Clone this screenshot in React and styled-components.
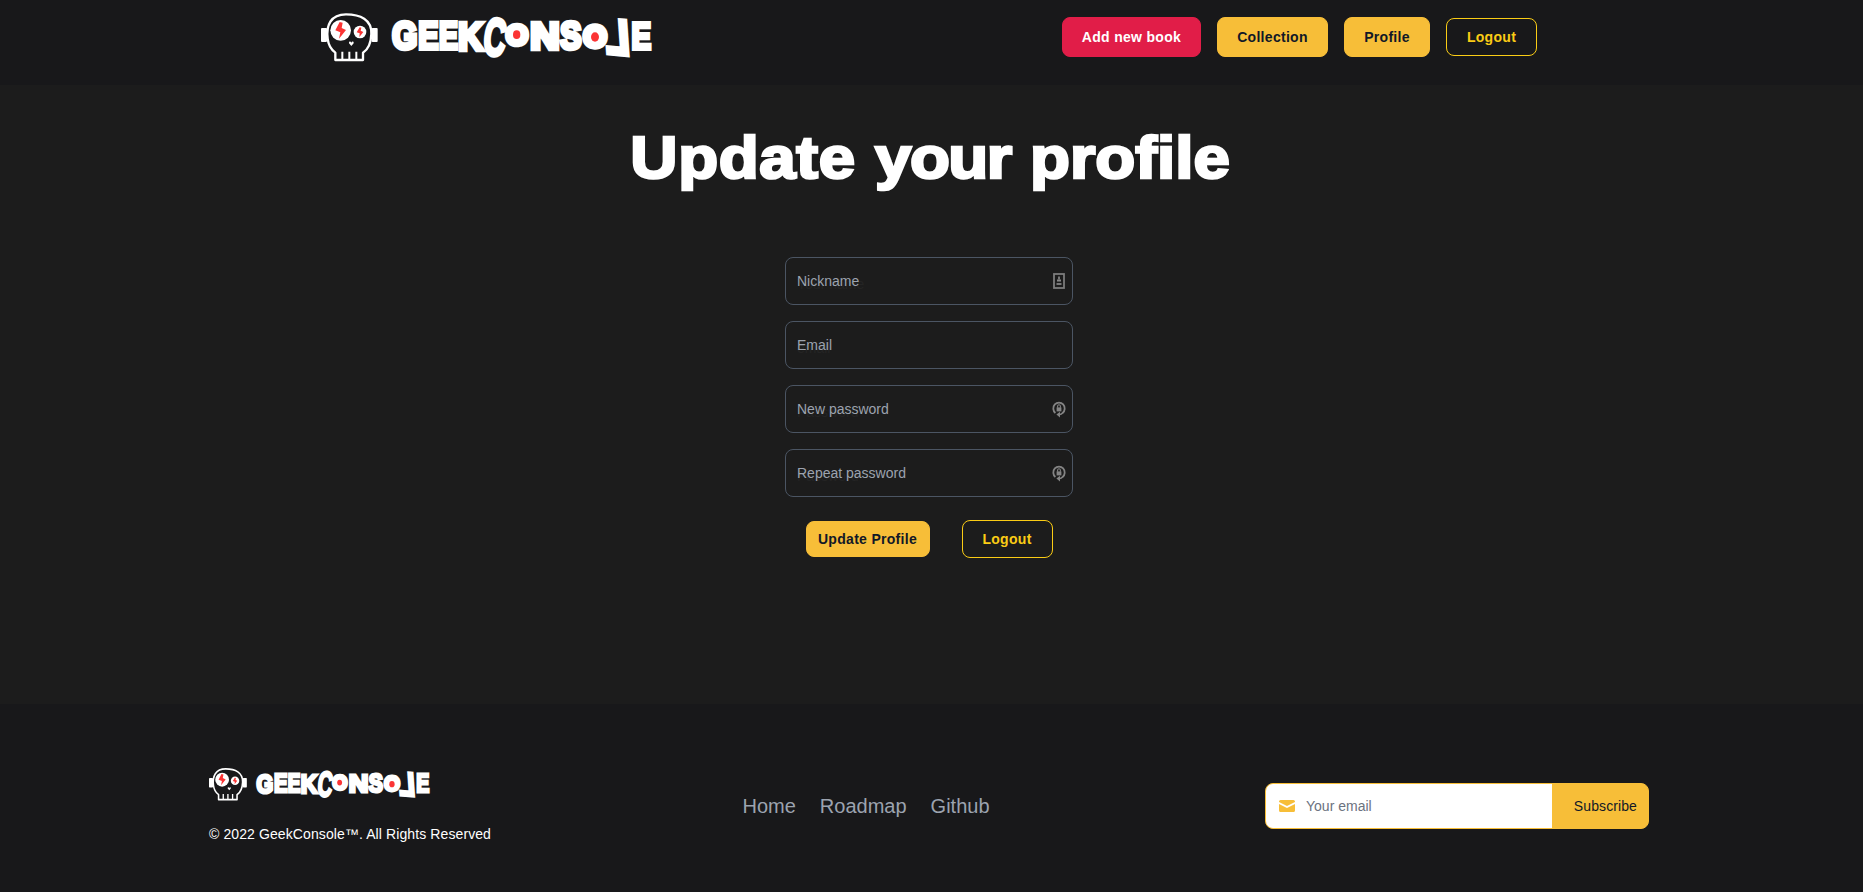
import React from "react";
import styled, { createGlobalStyle } from "styled-components";

const GlobalStyle = createGlobalStyle`
  *, *::before, *::after { box-sizing: border-box; }
  html, body { margin: 0; padding: 0; background: #1c1c1c; overflow: hidden; }
  body, button, input { font-family: "Liberation Sans", Arial, sans-serif; }
`;

const Page = styled.div`
  display: flex;
  flex-direction: column;
  height: 892px;
  width: 100%;
  color: #fff;
`;

const Header = styled.header`
  height: 85px;
  flex: none;
  background: #18181a;
  padding: 13px 5px 0 0;
`;

const HeaderInner = styled.div`
  width: 1216px;
  margin: 0 auto;
  display: flex;
  justify-content: space-between;
  align-items: flex-start;
`;

const Nav = styled.nav`
  display: flex;
  align-items: center;
  gap: 16px;
  margin-top: 4px;
`;

const tones = {
  red: { bg: "#e11d48", fg: "#ffffff", border: "#e11d48" },
  amber: { bg: "#f7be38", fg: "#111827", border: "#f7be38" },
  outline: { bg: "transparent", fg: "#facc15", border: "#facc15" },
};

const Button = styled.button`
  width: ${(p) => p.$w}px;
  height: ${(p) => p.$h}px;
  padding: 0;
  border-radius: 8px;
  border: 1px solid ${(p) => tones[p.$tone].border};
  background: ${(p) => tones[p.$tone].bg};
  color: ${(p) => tones[p.$tone].fg};
  font-size: 14px;
  font-weight: 700;
  line-height: 20px;
  letter-spacing: 0.3px;
  white-space: nowrap;
  cursor: pointer;
`;

const Main = styled.main`
  flex: 1;
  background: #1c1c1c;
  padding: 43px 5px 0 0;
  display: flex;
  flex-direction: column;
  align-items: center;
`;

const Title = styled.h1`
  margin: 0 0 69px 2px;
  height: 60px;
  font-size: 60px;
  line-height: 60px;
  font-weight: 700;
  white-space: nowrap;
  word-spacing: 1px;
  transform: scaleX(1.09);
  -webkit-text-stroke: 2.6px #fff;
`;

const Word = styled.span`
  letter-spacing: ${(p) => p.$track}px;
`;

const Form = styled.form`
  width: 288px;
  display: flex;
  flex-direction: column;
  gap: 16px;
`;

const Field = styled.label`
  position: relative;
  display: flex;
  align-items: center;
  height: 48px;
  border: 1px solid #4b5563;
  border-radius: 8px;
  padding: 0 6px 0 11px;
`;

const FieldInput = styled.input`
  flex: 1;
  min-width: 0;
  height: 100%;
  border: 0;
  padding: 5px 0 0;
  outline: 0;
  background: transparent;
  font-size: 14px;
  color: #fff;
  &::placeholder { color: #242424; opacity: 1; }
`;

const FieldLabel = styled.span`
  position: absolute;
  left: 11px;
  top: 13px;
  font-size: 14px;
  line-height: 20px;
  color: #9ca3af;
`;

const FormActions = styled.div`
  display: flex;
  justify-content: center;
  align-items: center;
  gap: 32px;
  margin-top: 7px;
`;

const Footer = styled.footer`
  height: 188px;
  flex: none;
  background: #18181a;
  padding: 64px 5px 0 0;
`;

const FooterInner = styled.div`
  width: 1440px;
  margin: 0 auto;
  display: grid;
  grid-template-columns: 533.5px 1fr 384px;
  align-items: start;
`;

const Brand = styled.div`
  display: flex;
  flex-direction: column;
`;

const Copyright = styled.p`
  margin: 23px 0 0;
  font-size: 14px;
  line-height: 20px;
  letter-spacing: 0.1px;
`;

const Links = styled.div`
  display: flex;
  gap: 24px;
  margin-top: 24px;
`;

const FooterLink = styled.a`
  font-size: 20px;
  line-height: 28px;
  color: #9ca3af;
`;

const Subscribe = styled.form`
  display: flex;
  height: 46px;
  margin-top: 15px;
  border: 1px solid #f7be38;
  border-radius: 8px;
  background: #f7be38;
  overflow: hidden;
`;

const EmailBox = styled.div`
  width: 286px;
  display: flex;
  align-items: center;
  gap: 11px;
  padding-left: 13px;
  background: #fff;
`;

const EmailInput = styled.input`
  flex: 1;
  min-width: 0;
  border: 0;
  outline: 0;
  padding: 0;
  background: transparent;
  font-size: 14px;
  &::placeholder { color: #6b7280; opacity: 1; }
`;

const SubscribeButton = styled.button`
  flex: 1;
  border: 0;
  padding: 0 11px 0 0;
  text-align: right;
  background: transparent;
  color: #111827;
  font-size: 14px;
  letter-spacing: 0.1px;
`;

const LogoSvg = styled.svg`
  display: block;
  width: ${(p) => p.$w}px;
  height: ${(p) => p.$h}px;
  overflow: visible;
`;

const ContactSvg = styled.svg`
  margin-right: 1px;
`;

// Left and right ink edges of each capital at a 100-unit font size.
const ink = {
  G: [4, 72], E: [7, 63], K: [7, 72], C: [4.5, 69],
  O: [4, 74], N: [7, 65.5], S: [4, 62.5], L: [7, 58],
};

// Places a capital so that its stroked ink fills the box x1..x2, y1..y2.
function Letter({ ch, x1, x2, y1, y2, s = 9, mirror = false, skew = 0, slope = 0, rot = 0 }) {
  const [l, r] = ink[ch];
  const sx = (x2 - x1) / (r - l + s);
  const round = "GCOS".includes(ch) ? 1.5 : 0;
  const sy = (y2 - y1) / (68.8 + s + round * 2);
  const cx = (x1 + x2) / 2;
  const cy = (y1 + y2) / 2;
  return (
    <text
      transform={`translate(${cx} ${cy}) rotate(${rot}) skewX(${skew}) skewY(${slope}) scale(${mirror ? -sx : sx} ${sy}) translate(${-(l + r) / 2} 34.4)`}
      fontFamily="Liberation Sans, Arial, sans-serif"
      fontWeight="700"
      fontSize="100"
      fill="#fff"
      stroke="#fff"
      strokeWidth={s}
    >
      {ch}
    </text>
  );
}

function Logo({ width, height }) {
  return (
    <LogoSvg $w={width} $h={height} viewBox="33 39 993 147" preserveAspectRatio="none">
      <rect x="33" y="84" width="18" height="42" rx="3" fill="#fff" />
      <rect x="185" y="84" width="18" height="42" rx="3" fill="#fff" />
      <path
        d="M76 180V158C62 148 55 134 53 116C48 76 62 43 108 43C150 43 186 58 184 102C183 128 175 148 159 158V180Z"
        fill="#18181a"
        stroke="#fff"
        strokeWidth="7"
        strokeLinejoin="round"
      />
      <path d="M97 155V180M118 155V180M139 155V180" stroke="#fff" strokeWidth="6" />
      <circle cx="92" cy="91" r="31" fill="#fff" />
      <circle cx="150" cy="96" r="19" fill="#fff" />
      <path d="M89 66L76 91L91 97L87 116L108 90L95 84L98 68Z" fill="#fb3434" />
      <path d="M149 82L140 97L149 100L148 111L160 96L152 92L154 83Z" fill="#fb3434" />
      <path d="M124 138L117 130C116 124 122 123 124 128C126 123 132 124 131 130Z" fill="#fff" />
      <Letter ch="G" x1={245} x2={322} y1={60} y2={157} s={12} />
      <Letter ch="E" x1={326} x2={387} y1={63} y2={154} s={11} />
      <Letter ch="E" x1={388} x2={445} y1={63} y2={154} s={11} />
      <Letter ch="K" x1={446} x2={525} y1={63} y2={157} s={12} />
      <Letter ch="C" x1={523} x2={589} y1={49} y2={174} s={8} rot={7} />
      <Letter ch="O" x1={584} x2={658} y1={66} y2={142} s={26} />
      <ellipse cx="621" cy="104" rx="18" ry="20" fill="#fff" />
      <ellipse cx="620" cy="104" rx="11" ry="13" fill="#fb3434" />
      <Letter ch="N" x1={662} x2={748} y1={65} y2={153} s={12} />
      <Letter ch="S" x1={749} x2={816} y1={60} y2={156} s={12} />
      <Letter ch="L" x1={885} x2={955} y1={53} y2={169} s={10} mirror skew={4} slope={5} />
      <Letter ch="O" x1={816} x2={894} y1={68} y2={150} s={26} />
      <ellipse cx="855" cy="110" rx="19" ry="21" fill="#fff" />
      <ellipse cx="855" cy="111" rx="12" ry="14" fill="#fb3434" />
      <Letter ch="E" x1={966} x2={1025} y1={63} y2={153} s={11} />
    </LogoSvg>
  );
}

const ContactIcon = () => (
  <ContactSvg width="12" height="16" viewBox="0 0 12 16">
    <rect x="1" y="1" width="10" height="14" fill="none" stroke="#7c7c7c" strokeWidth="1.8" />
    <rect x="5" y="3.5" width="2" height="3" fill="#777" />
    <rect x="4" y="6.5" width="4" height="2" fill="#888" />
    <rect x="3.5" y="10" width="5" height="2" fill="#777" />
  </ContactSvg>
);

const PasswordIcon = () => (
  <svg width="14" height="17" viewBox="0 0 14 17">
    <path d="M3.4 12A5.7 5.9 0 1 1 10.6 12Q9.4 13.4 7 13.6" fill="none" stroke="#848484" strokeWidth="1.8" />
    <path d="M8 10.8V16.6L4.4 13.6Z" fill="#848484" />
    <rect x="4.6" y="6.4" width="4.8" height="4" fill="#848484" />
    <path d="M5.6 6.8V5.2A1.4 1.4 0 0 1 8.4 5.2V6.8" fill="none" stroke="#848484" strokeWidth="1.1" />
  </svg>
);

const MailIcon = () => (
  <svg width="16" height="12" viewBox="0 0 16 12">
    <path d="M0 1.9V1.6A1.6 1.6 0 0 1 1.6 0H14.4A1.6 1.6 0 0 1 16 1.6V1.9L8 5.9Z" fill="#f7be38" />
    <path d="M0 4.1L8 8.1L16 4.1V10.4A1.6 1.6 0 0 1 14.4 12H1.6A1.6 1.6 0 0 1 0 10.4Z" fill="#f7be38" />
  </svg>
);

const fields = [
  { label: "Nickname", hint: "Your name", Icon: ContactIcon },
  { label: "Email", hint: "email" },
  { label: "New password", hint: "Password", Icon: PasswordIcon },
  { label: "Repeat password", hint: "Password", Icon: PasswordIcon },
];

export default function App() {
  return (
    <Page>
      <GlobalStyle />
      <Header>
        <HeaderInner>
          <Logo width={331} height={49} />
          <Nav>
            <Button $tone="red" $w={139} $h={40}>Add new book</Button>
            <Button $tone="amber" $w={111} $h={40}>Collection</Button>
            <Button $tone="amber" $w={86} $h={40}>Profile</Button>
            <Button $tone="outline" $w={91} $h={38}>Logout</Button>
          </Nav>
        </HeaderInner>
      </Header>
      <Main>
        <Title>
          <Word $track={0.6}>Update</Word> <Word $track={-1.4}>your</Word> <Word $track={0}>profile</Word>
        </Title>
        <Form>
          {fields.map(({ label, hint, Icon }) => (
            <Field key={label}>
              <FieldInput placeholder={hint} />
              <FieldLabel>{label}</FieldLabel>
              {Icon && <Icon />}
            </Field>
          ))}
          <FormActions>
            <Button type="button" $tone="amber" $w={124} $h={36}>Update Profile</Button>
            <Button type="button" $tone="outline" $w={91} $h={38}>Logout</Button>
          </FormActions>
        </Form>
      </Main>
      <Footer>
        <FooterInner>
          <Brand>
            <Logo width={221} height={33} />
            <Copyright>© 2022 GeekConsole™. All Rights Reserved</Copyright>
          </Brand>
          <Links>
            <FooterLink>Home</FooterLink>
            <FooterLink>Roadmap</FooterLink>
            <FooterLink>Github</FooterLink>
          </Links>
          <Subscribe>
            <EmailBox>
              <MailIcon />
              <EmailInput placeholder="Your email" />
            </EmailBox>
            <SubscribeButton type="button">Subscribe</SubscribeButton>
          </Subscribe>
        </FooterInner>
      </Footer>
    </Page>
  );
}
